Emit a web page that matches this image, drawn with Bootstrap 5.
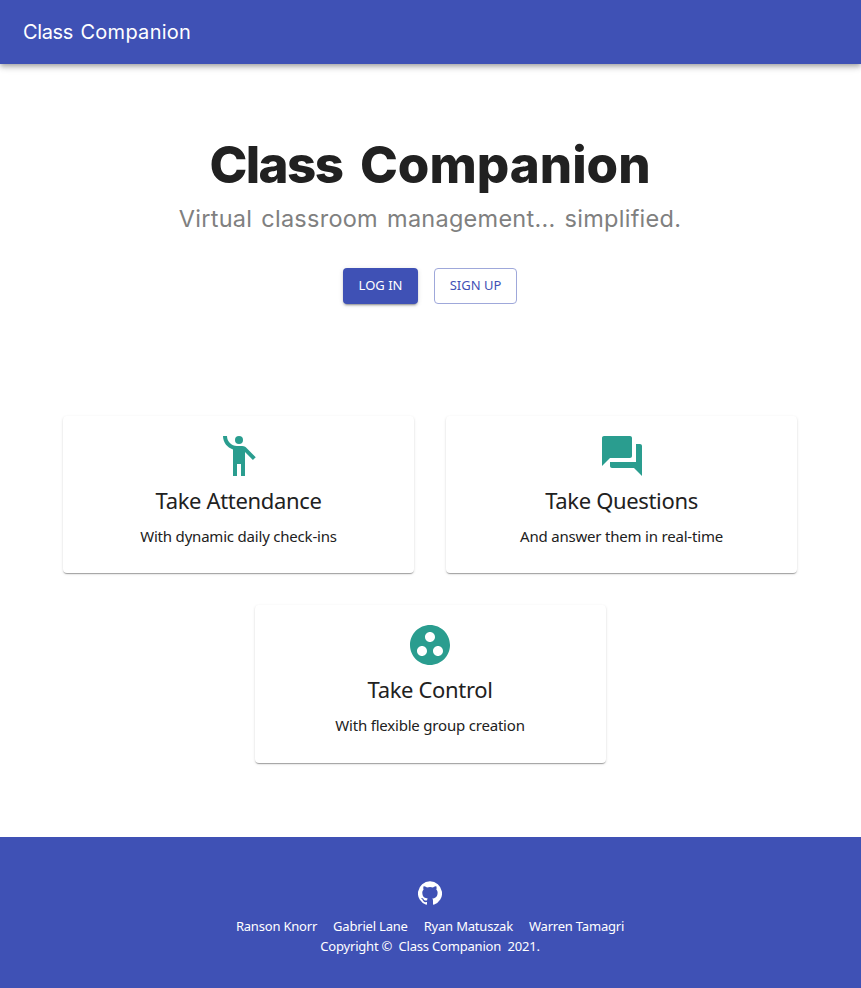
<!DOCTYPE html>
<html lang="en">
<head>
<meta charset="utf-8">
<meta name="viewport" content="width=device-width, initial-scale=1">
<title>Class Companion</title>
<link rel="stylesheet" href="https://cdn.jsdelivr.net/npm/bootstrap@5.3.0/dist/css/bootstrap.min.css">
<style>
  body { font-family: "Noto Sans", sans-serif; color: #212121; }
  .app-bar, .site-footer { background: #3f51b5; color: #fff; }
  .app-bar { height: 64px; padding: 0 23px; box-shadow: 0 2px 4px -1px rgba(0,0,0,.2), 0 4px 5px rgba(0,0,0,.14), 0 1px 10px rgba(0,0,0,.12); }
  .app-bar .navbar-brand, .hero-title, .hero-sub { font-family: Inter, sans-serif; white-space: nowrap; }
  .app-bar .navbar-brand { font-size: 20px; line-height: 32px; word-spacing: 2px; color: #fff; }
  .brand-first { letter-spacing: -.4px; }
  .brand-last { letter-spacing: .28px; }
  .hero { height: 352px; padding: 69px 1px 0 0; }
  .hero-title { font-size: 51px; font-weight: 800; line-height: 64px; letter-spacing: 0; word-spacing: 6.5px; }
  .hero-title span { letter-spacing: -1.6px; }
  .hero-sub { font-size: 23.5px; font-weight: 400; line-height: 32px; letter-spacing: .26px; word-spacing: 2.2px; color: #808080; margin: 6px 0 33px; }
  .action { height: 36px; font-size: 13px; line-height: 24px; border-radius: 4px; padding: 5px 0; }
  .action-login { width: 75px; background: #3f51b5; color: #fff; box-shadow: 0 3px 1px -2px rgba(0,0,0,.2), 0 2px 2px rgba(0,0,0,.14), 0 1px 5px rgba(0,0,0,.12); }
  .action-signup { width: 83px; color: #3f51b5; border-color: #9fa8da; padding-top: 4px; }
  .action:hover { background: #303f9f; color: #fff; }
  .features { padding: 0 64px 0 63px; gap: 32px; height: 421px; }
  .feature { width: 351px; height: 157.45px; padding: 16px; border-radius: 4px; box-shadow: 0 2px 1px -1px rgba(0,0,0,.2), 0 1px 1px rgba(0,0,0,.14), 0 1px 3px rgba(0,0,0,.12); color: #212121; }
  .feature svg { width: 48px; height: 48px; fill: #2a9d8f; }
  .feature h2 { font-size: 22px; font-weight: 400; line-height: 32px; letter-spacing: -.34px; margin: 3.5px 0 8px; }
  .feature p { font-size: 15px; line-height: 24px; letter-spacing: -.2px; }
  .site-footer { height: 151px; padding: 44px 1px 0 0; font-size: 13px; line-height: 20px; letter-spacing: -.2px; }
  .site-footer svg { width: 24px; height: 24px; fill: #fff; margin-bottom: 11px; }
</style>
<script src="https://cdn.jsdelivr.net/npm/bootstrap@5.3.0/dist/js/bootstrap.bundle.min.js"></script>
</head>
<body>
<nav class="navbar app-bar position-relative">
  <a class="navbar-brand text-white m-0 p-0" href="#"><span class="brand-first">Class</span> <span class="brand-last">Companion</span></a>
</nav>
<main>
  <header class="hero text-center">
    <h1 class="hero-title m-0"><span>Class</span> Companion</h1>
    <p class="hero-sub">Virtual classroom management... simplified.</p>
    <div class="d-flex justify-content-center gap-3">
      <a class="btn action action-login border-0" href="#">LOG IN</a>
      <a class="btn action action-signup" href="#">SIGN UP</a>
    </div>
  </header>
  <section class="features d-flex flex-wrap justify-content-center align-content-start">
    <div class="card feature border-0 d-flex align-items-center text-center">
      <svg viewBox="0 0 24 24"><circle cx="12" cy="4" r="2"/><path d="M15.89 8.11C15.5 7.72 14.83 7 13.53 7h-2.54C8.24 6.99 6 4.75 6 2H4c0 3.16 2.11 5.84 5 6.71V22h2v-6h2v6h2V10.05L18.95 14l1.41-1.41-4.47-4.48z"/></svg>
      <h2>Take Attendance</h2>
      <p class="m-0">With dynamic daily check-ins</p>
    </div>
    <div class="card feature border-0 d-flex align-items-center text-center">
      <svg viewBox="0 0 24 24"><path d="M21 6h-2v9H6v2c0 .55.45 1 1 1h11l4 4V7c0-.55-.45-1-1-1zm-4 6V3c0-.55-.45-1-1-1H3c-.55 0-1 .45-1 1v14l4-4h10c.55 0 1-.45 1-1z"/></svg>
      <h2>Take Questions</h2>
      <p class="m-0">And answer them in real-time</p>
    </div>
    <div class="card feature border-0 d-flex align-items-center text-center">
      <svg viewBox="0 0 24 24"><path d="M12 2C6.48 2 2 6.48 2 12s4.48 10 10 10 10-4.48 10-10S17.52 2 12 2zM8 17.5c-1.38 0-2.5-1.12-2.5-2.5s1.12-2.5 2.5-2.5 2.5 1.12 2.5 2.5-1.12 2.5-2.5 2.5zM9.5 8c0-1.38 1.12-2.5 2.5-2.5s2.5 1.12 2.5 2.5-1.12 2.5-2.5 2.5S9.5 9.38 9.5 8zm6.5 9.5c-1.38 0-2.5-1.12-2.5-2.5s1.12-2.5 2.5-2.5 2.5 1.12 2.5 2.5-1.12 2.5-2.5 2.5z"/></svg>
      <h2>Take Control</h2>
      <p class="m-0">With flexible group creation</p>
    </div>
  </section>
</main>
<footer class="site-footer d-flex flex-column align-items-center">
  <svg viewBox="0 0 24 24"><path d="M12 .3a12 12 0 0 0-3.8 23.4c.6.1.8-.3.8-.6v-2c-3.3.7-4-1.6-4-1.6-.6-1.4-1.4-1.8-1.4-1.8-1-.7.1-.7.1-.7 1.2 0 1.9 1.2 1.9 1.2 1 1.8 2.8 1.3 3.5 1 0-.8.4-1.3.7-1.6-2.7-.3-5.5-1.3-5.5-6 0-1.2.5-2.3 1.3-3.1-.2-.4-.6-1.6 0-3.2 0 0 1-.3 3.4 1.2a11.5 11.5 0 0 1 6 0c2.3-1.5 3.3-1.2 3.3-1.2.6 1.6.2 2.8 0 3.2.9.8 1.3 1.9 1.3 3.2 0 4.6-2.8 5.6-5.5 5.9.5.4.9 1 .9 2.2v3.3c0 .3.1.7.8.6A12 12 0 0 0 12 .3"/></svg>
  <div class="d-flex gap-3"><span>Ranson Knorr</span><span>Gabriel Lane</span><span>Ryan Matuszak</span><span>Warren Tamagri</span></div>
  <div>Copyright ©&nbsp; Class Companion&nbsp; 2021.</div>
</footer>
</body>
</html>
